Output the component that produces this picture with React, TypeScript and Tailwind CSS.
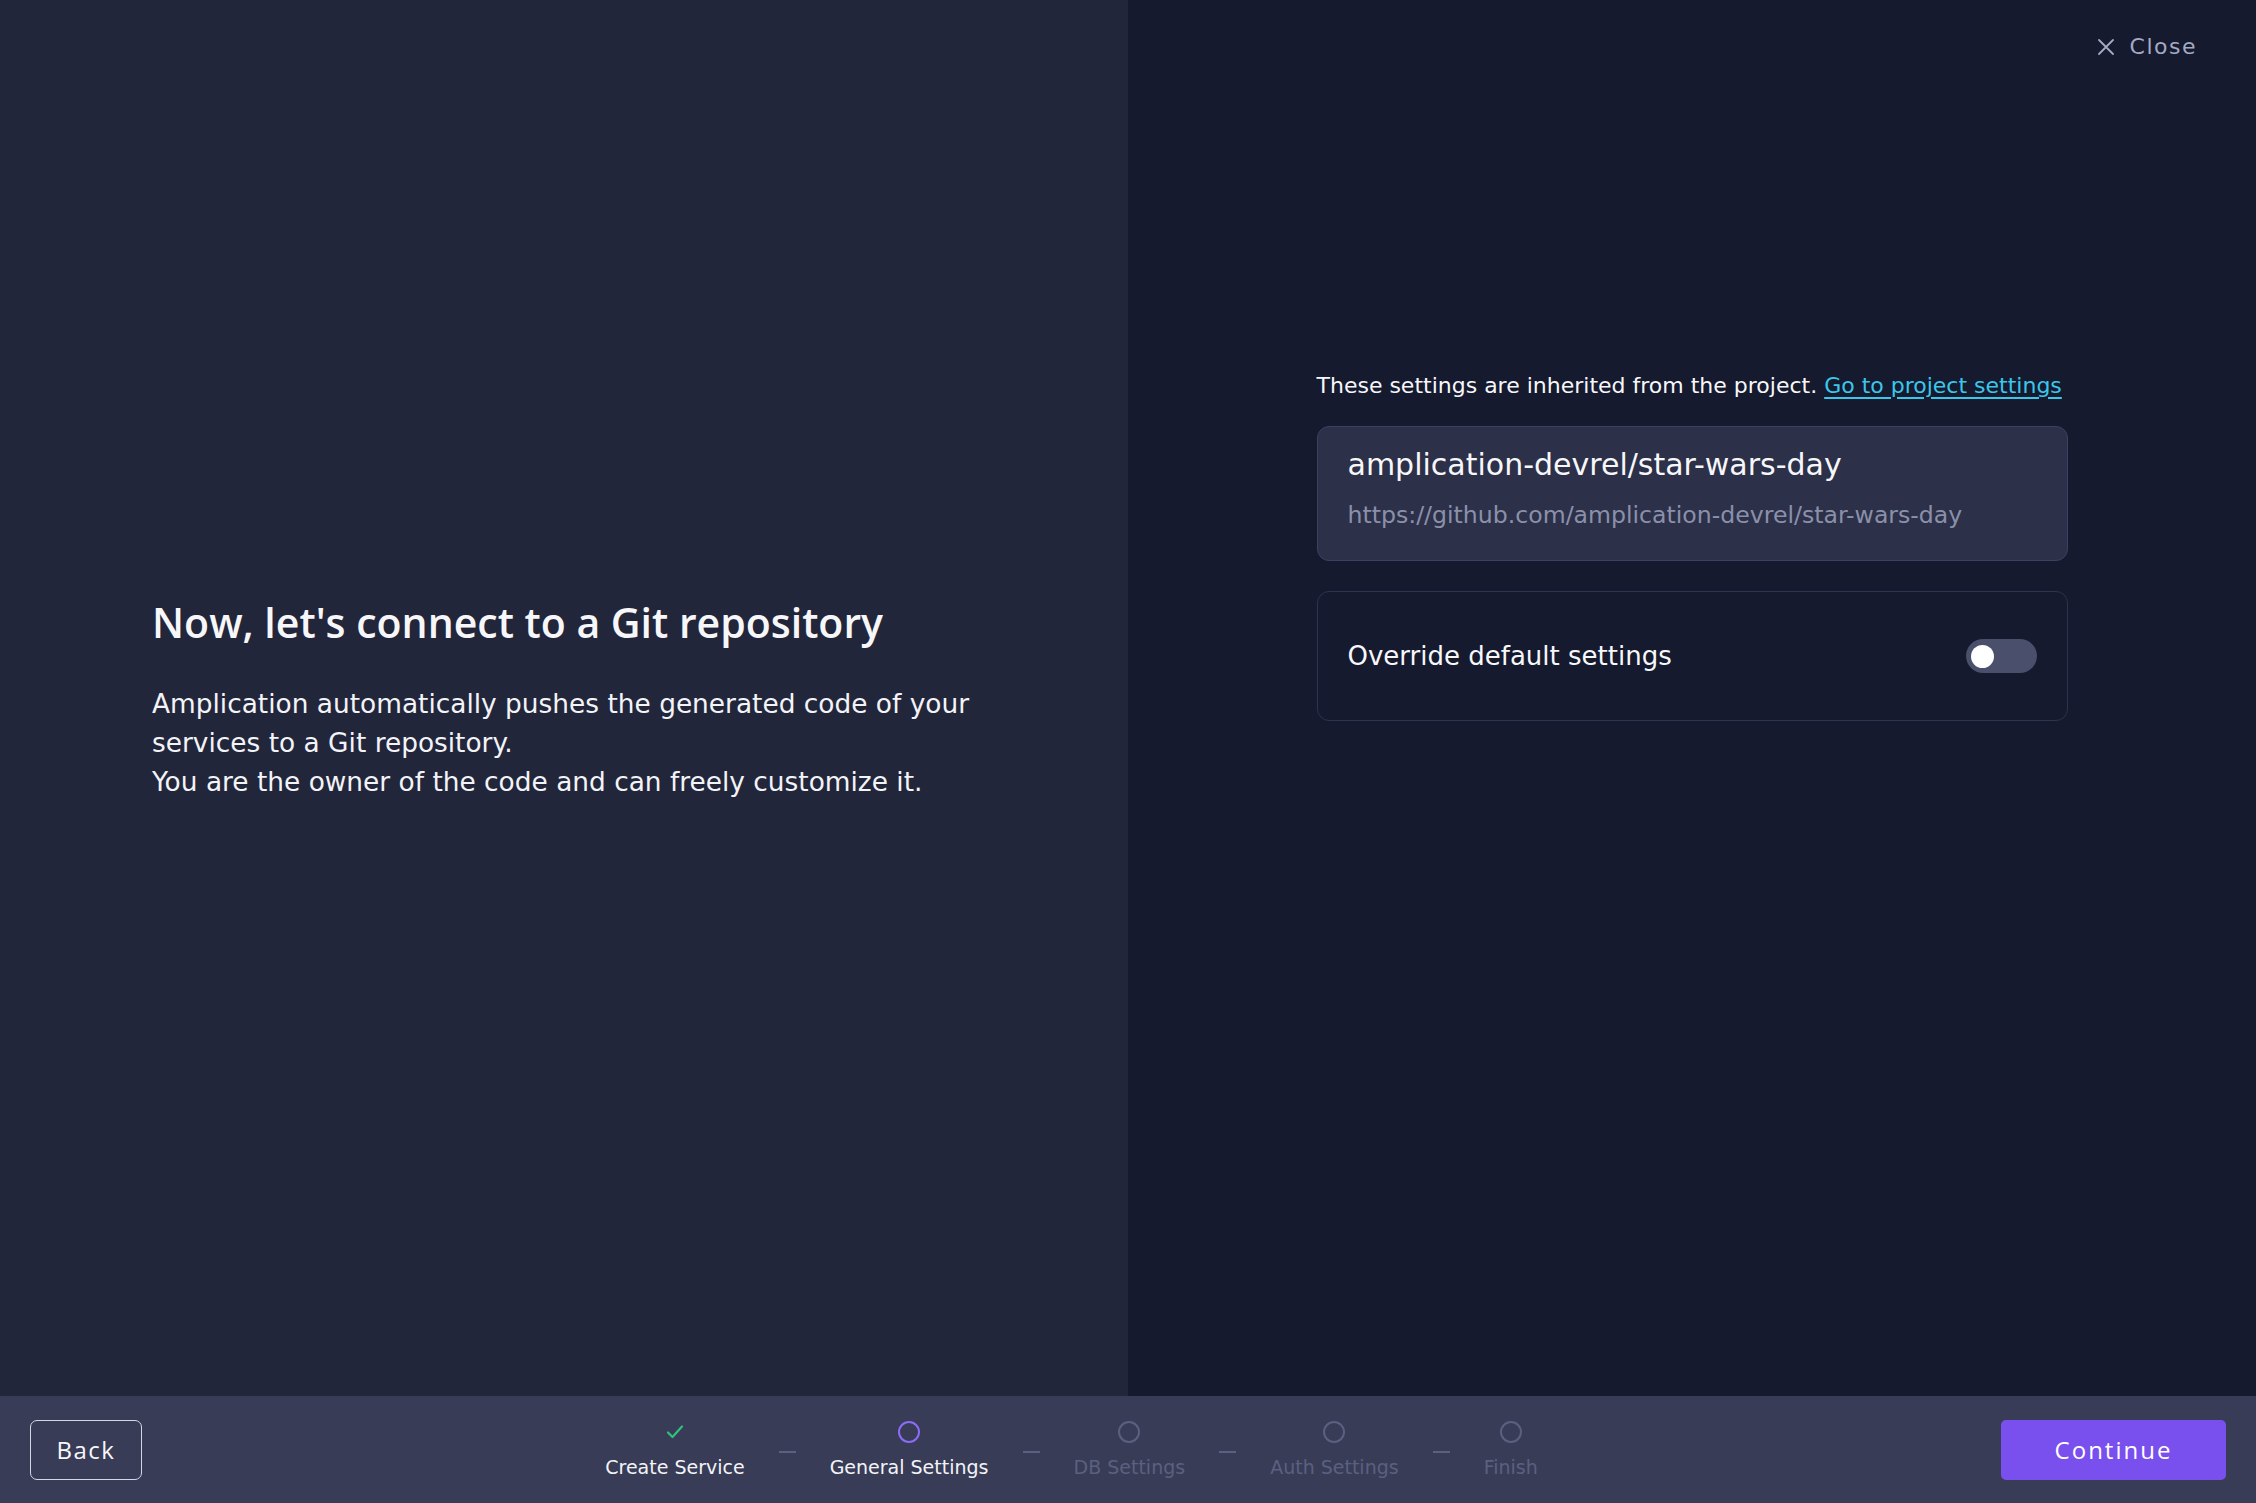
import React, {useState} from 'react';

const font = "font-['DejaVu_Sans','Open_Sans',sans-serif]";
const headFont = "font-['Open_Sans','Liberation_Sans',sans-serif]";

const steps = [
    {label: 'Create Service', state: 'done'},
    {label: 'General Settings', state: 'current'},
    {label: 'DB Settings', state: 'todo'},
    {label: 'Auth Settings', state: 'todo'},
    {label: 'Finish', state: 'todo'},
];

function StepIcon({state}: { state: string }) {
    if (state === 'done') {
        return (
            <svg width="22" height="22" viewBox="0 0 22 22" fill="none">
                <path d="M4 11.5l4.5 4.5L18 5.5" stroke="#2ec27e" strokeWidth="2.2" strokeLinecap="round"
                      strokeLinejoin="round"/>
            </svg>
        )
    }
    return (
        <div className={state === 'current'
            ? 'w-[22px] h-[22px] rounded-full border-2 border-[#8c6cf6]'
            : 'w-[22px] h-[22px] rounded-full border-2 border-[#5b6080]'}/>
    )
}

function App() {
    const [override, setOverride] = useState(false)

    const stepList = steps.map((item, i) => {
        return (
            <React.Fragment key={i}>
                {i > 0 && <div className="w-[17px] h-[2px] bg-[#5b6080] mx-[34px] mt-[4px]"/>}
                <div className="flex flex-col items-center">
                    <div className="h-[22px] flex items-center justify-center">
                        <StepIcon state={item.state}/>
                    </div>
                    <p className={item.state === 'todo'
                        ? 'mt-[12px] text-[19px] leading-[24px] text-[#5b6080]'
                        : 'mt-[12px] text-[19px] leading-[24px] text-[#f3f4f8]'}>
                        {item.label}
                    </p>
                </div>
            </React.Fragment>
        )
    })

    return (
        <div className={`flex flex-col h-screen w-screen overflow-hidden ${font}`}>
            <div className="flex flex-1 min-h-0">
                {/* Left */}
                <div className="flex flex-col justify-center w-[1128px] bg-[#22263b] pl-[152px] pr-[60px]">
                    <h1 className={`${headFont} text-[41px] leading-[52px] font-semibold text-[#f7f7fa]`}>
                        Now, let's connect to a Git repository
                    </h1>
                    <div className="mt-[36px] text-[26.4px] leading-[39px] text-[#f3f4f8]">
                        <p>Amplication automatically pushes the generated code of your<br/>services to a Git repository.</p>
                        <p>You are the owner of the code and can freely customize it.</p>
                    </div>
                </div>

                {/* Right */}
                <div className="flex flex-col flex-1 bg-[#151a2e]">
                    <div className="flex justify-end pt-[33px] pr-[59px]">
                        <button className="flex items-center text-[#a4a9c4] text-[22px] leading-[28px] tracking-[1.5px]">
                            <svg width="20" height="20" viewBox="0 0 20 20" fill="none" className="mr-[14px]">
                                <path d="M3 3l14 14M17 3L3 17" stroke="#a4a9c4" strokeWidth="1.8"
                                      strokeLinecap="round"/>
                            </svg>
                            Close
                        </button>
                    </div>
                    <div className="w-[751px] mx-auto mt-[310px]">
                        <p className="whitespace-nowrap text-[22px] leading-[30px] text-[#f7f7fa]">
                            These settings are inherited from the project.{' '}
                            <a href="#" className="text-[#3cc6ea] underline underline-offset-[4px]">Go to project settings</a>
                        </p>
                        <div
                            className="mt-[25px] h-[135px] rounded-[12px] bg-[#2c3049] border border-[#3c4161] pl-[30px] pt-[18px]">
                            <p className="text-[30px] leading-[40px] text-[#f7f7fa]">amplication-devrel/star-wars-day</p>
                            <p className="mt-[15px] text-[23.6px] leading-[30px] text-[#8b90aa]">https://github.com/amplication-devrel/star-wars-day</p>
                        </div>
                        <div
                            className="flex items-center justify-between mt-[30px] h-[130px] rounded-[12px] border border-[#2e3350] pl-[30px] pr-[30px]">
                            <p className="text-[26px] leading-[36px] text-[#f7f7fa]">Override default settings</p>
                            <button onClick={() => setOverride(!override)}
                                    className={override
                                        ? 'flex items-center justify-end w-[71px] h-[34px] rounded-full bg-[#7950f2] px-[5px]'
                                        : 'flex items-center justify-start w-[71px] h-[34px] rounded-full bg-[#4a4f6c] px-[5px]'}>
                                <span className="block w-[23px] h-[23px] rounded-full bg-white"/>
                            </button>
                        </div>
                    </div>
                </div>
            </div>

            {/* Bottom bar */}
            <div className="flex items-center justify-between h-[107px] bg-[#383c56] pl-[30px] pr-[30px]">
                <button
                    className={`${headFont} w-[112px] h-[60px] rounded-[7px] border border-[#d5d7e3] text-[24px] text-[#f7f7fa] tracking-[1.5px]`}>
                    Back
                </button>
                <div className="flex items-center">
                    {stepList}
                </div>
                <button
                    className={`${headFont} w-[225px] h-[60px] rounded-[5px] bg-[#7950ed] text-[24px] text-white tracking-[2px]`}>
                    Continue
                </button>
            </div>
        </div>
    );
}

export default App;
